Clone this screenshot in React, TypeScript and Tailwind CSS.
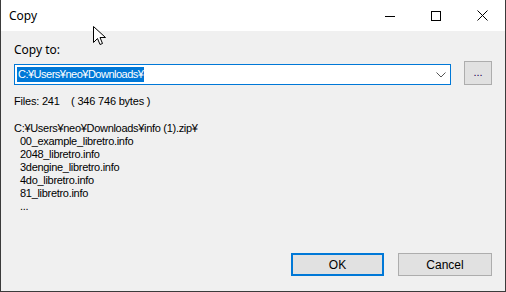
import React from 'react'

const files = ['00_example_libretro.info', '2048_libretro.info', '3dengine_libretro.info', '4do_libretro.info', '81_libretro.info', '...']

const App = () => {
    return (
        <div className="w-[506px] h-[292px] bg-[#f0f0f0] border-x border-b border-[#3b3b3b] relative overflow-hidden flex flex-col" style={{ fontFamily: '"Liberation Sans", Arial, sans-serif' }}>
            {/* Title bar */}
            <div className="h-[31px] bg-white flex items-center shrink-0">
                <span className="pl-[8px] text-[12px] text-black" style={{ fontFamily: '"Noto Sans", "Open Sans", sans-serif' }}>Copy</span>
                <div className="ml-auto flex h-full">
                    <div className="w-[46px] h-full flex items-center justify-center">
                        <svg width="10" height="10" viewBox="0 0 10 10"><path d="M0 5.5H10" stroke="#000" strokeWidth="1" /></svg>
                    </div>
                    <div className="w-[46px] h-full flex items-center justify-center">
                        <svg width="10" height="10" viewBox="0 0 10 10"><rect x="0.5" y="0.5" width="9" height="9" fill="none" stroke="#000" strokeWidth="1" /></svg>
                    </div>
                    <div className="w-[46px] h-full flex items-center justify-center">
                        <svg width="11" height="11" viewBox="0 0 11 11"><path d="M0.5 0.5L10.5 10.5M10.5 0.5L0.5 10.5" stroke="#000" strokeWidth="1" /></svg>
                    </div>
                </div>
            </div>

            {/* Body */}
            <div className="flex-1 flex flex-col pl-[13px] pr-[13px]">
                <div className="mt-[11px] text-[12px] leading-[16px] text-black" style={{ fontFamily: '"Noto Sans", "Open Sans", sans-serif' }}>Copy to:</div>

                <div className="flex items-start mt-[3px]">
                    <div className="mt-[3px] w-[438px] h-[21px] bg-white border border-[#0078d7] flex items-center pl-[2px] pr-[4px]">
                        <span className="bg-[#0078d7] text-white text-[11px] leading-[15px] px-[1px] tracking-[-0.5px]">C:¥Users¥neo¥Downloads¥</span>
                        <svg className="ml-auto" width="10" height="6" viewBox="0 0 10 6"><path d="M0.5 0.5L5 5L9.5 0.5" fill="none" stroke="#555" strokeWidth="1" /></svg>
                    </div>
                    <div className="ml-[13px] w-[28px] h-[24px] bg-[#e1e1e1] border border-[#adadad] flex items-center justify-center text-[11px] leading-none text-[#1a0050] pb-[2px]">...</div>
                </div>

                <div className="mt-[10px] text-[11px] leading-[13px] text-black whitespace-pre tracking-[-0.2px]">Files: 241    ( 346 746 bytes )</div>

                <div className="mt-[14px] text-[11px] leading-[13px] text-black tracking-[-0.3px]">
                    <div>C:¥Users¥neo¥Downloads¥info (1).zip¥</div>
                    {files.map((f) => (
                        <div key={f} className="pl-[6px]">{f}</div>
                    ))}
                </div>

                <div className="mt-auto mb-[15px] flex justify-end gap-[14px]">
                    <div className="w-[93px] h-[23px] border-2 border-[#0078d7] bg-[#e1e1e1] flex items-center justify-center text-[12px] text-black">OK</div>
                    <div className="w-[94px] h-[23px] border border-[#adadad] bg-[#e1e1e1] flex items-center justify-center text-[12px] text-black">Cancel</div>
                </div>
            </div>

            {/* Mouse cursor */}
            <svg className="absolute left-[92px] top-[26px]" width="13" height="20" viewBox="0 0 13 20">
                <path d="M0.5 0.5V16.5L4.5 12.5L7 18.5L9.5 17.5L7 11.5H12.5Z" fill="#fff" stroke="#000" strokeWidth="1" strokeLinejoin="round" />
            </svg>
        </div>
    )
}

export default App
